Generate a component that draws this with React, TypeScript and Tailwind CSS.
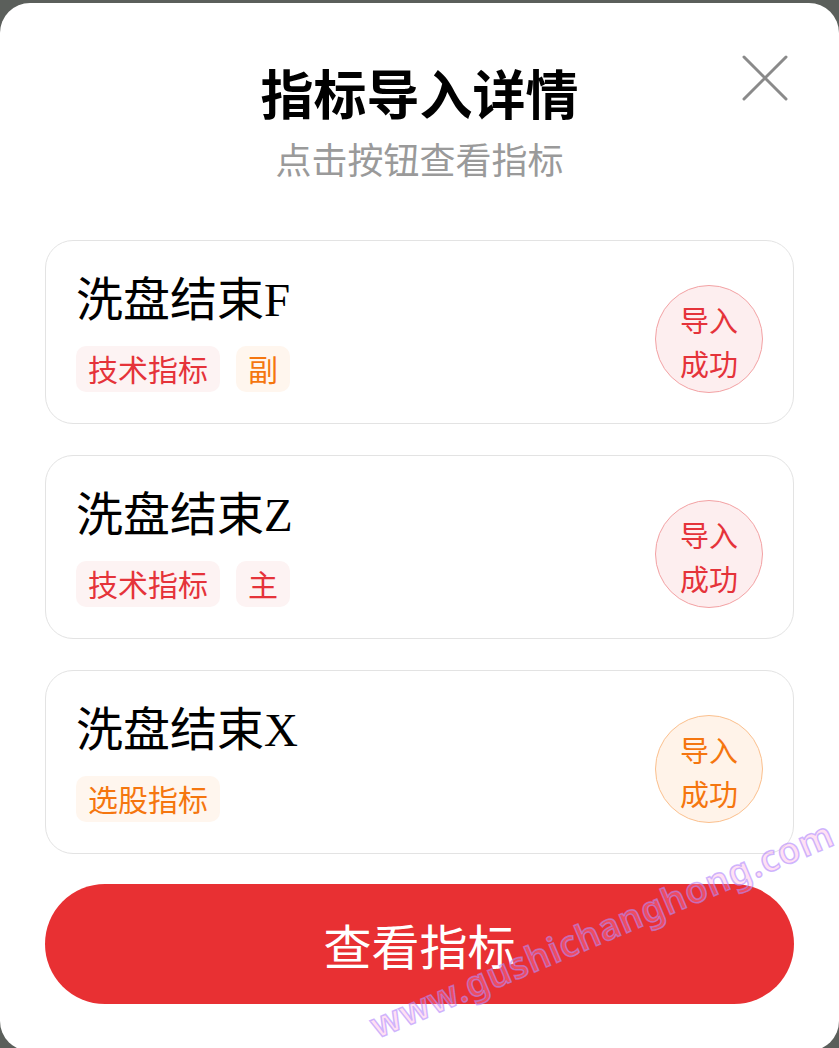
import React from 'react';

type Tone = 'red' | 'orange';

interface Tag {
  label: string;
  tone: Tone;
}

interface Item {
  name: string;
  tags: Tag[];
  tone: Tone;
}

const items: Item[] = [
  { name: '洗盘结束F', tags: [{ label: '技术指标', tone: 'red' }, { label: '副', tone: 'orange' }], tone: 'red' },
  { name: '洗盘结束Z', tags: [{ label: '技术指标', tone: 'red' }, { label: '主', tone: 'red' }], tone: 'red' },
  { name: '洗盘结束X', tags: [{ label: '选股指标', tone: 'orange' }], tone: 'orange' },
];

const tagClasses: Record<Tone, string> = {
  red: 'bg-[#fdf3f3] text-[#e5333a]',
  orange: 'bg-[#fff6ee] text-[#f5760f]',
};

const badgeClasses: Record<Tone, string> = {
  red: 'bg-[#fdeeef] border-[#f3a2a4] text-[#e5333a]',
  orange: 'bg-[#fff3e9] border-[#fbc08e] text-[#f5760f]',
};

const CloseIcon: React.FC = () => (
  <svg width="46" height="46" viewBox="0 0 46 46" fill="none">
    <path d="M2 2 L44 44 M44 2 L2 44" stroke="#8a8a8a" strokeWidth="3" strokeLinecap="round" />
  </svg>
);

const ItemCard: React.FC<{ item: Item }> = ({ item }) => (
  <div className="flex items-center justify-between h-[184px] rounded-[28px] border border-[#e3e3e3] pl-[30px] pr-[30px]">
    <div className="flex flex-col">
      <div className="text-[47px] leading-[56px] text-black font-['Liberation_Serif','Noto_Sans_CJK_SC',serif]">
        {item.name}
      </div>
      <div className="flex gap-4 mt-[18px]">
        {item.tags.map((t) => (
          <span
            key={t.label}
            className={`h-[46px] px-3 rounded-[10px] text-[30px] leading-[44px] ${tagClasses[t.tone]}`}
          >
            {t.label}
          </span>
        ))}
      </div>
    </div>
    <div
      className={`mt-[14px] w-[108px] h-[108px] rounded-full border flex flex-col items-center justify-center text-[29px] leading-[44px] pt-1 ${badgeClasses[item.tone]}`}
    >
      <span>导入</span>
      <span>成功</span>
    </div>
  </div>
);

export default function App() {
  return (
    <div className="w-[839px] h-[1048px] overflow-hidden bg-[#5b5f5b] pt-[3px] font-['Noto_Sans_CJK_SC',sans-serif]">
      <div className="relative h-[1048px] overflow-hidden bg-white rounded-[30px] px-[45px]">
        <div className="absolute top-[52px] right-[51px]">
          <CloseIcon />
        </div>

        <div className="flex flex-col items-center pt-[57px]">
          <h1 className="text-[53px] leading-[64px] font-bold text-black">指标导入详情</h1>
          <p className="mt-3 text-[36px] leading-[44px] text-[#9a9a9a]">点击按钮查看指标</p>
        </div>

        <div className="flex flex-col gap-[31px] mt-[60px]">
          {items.map((it) => (
            <ItemCard key={it.name} item={it} />
          ))}
        </div>

        <button className="mt-[30px] w-full h-[120px] rounded-full bg-[#e83033] text-white text-[48px] leading-none">
          查看指标
        </button>

        <div className="absolute left-[372px] top-[1004px] origin-left -rotate-[23deg] pointer-events-none whitespace-nowrap text-[36px] leading-[40px] tracking-[1px] font-semibold text-[rgba(255,150,215,0.3)] [-webkit-text-stroke:1.5px_rgba(175,140,255,0.6)] font-['Noto_Sans',sans-serif]">
          www.gushichanghong.com
        </div>
      </div>
    </div>
  );
}
